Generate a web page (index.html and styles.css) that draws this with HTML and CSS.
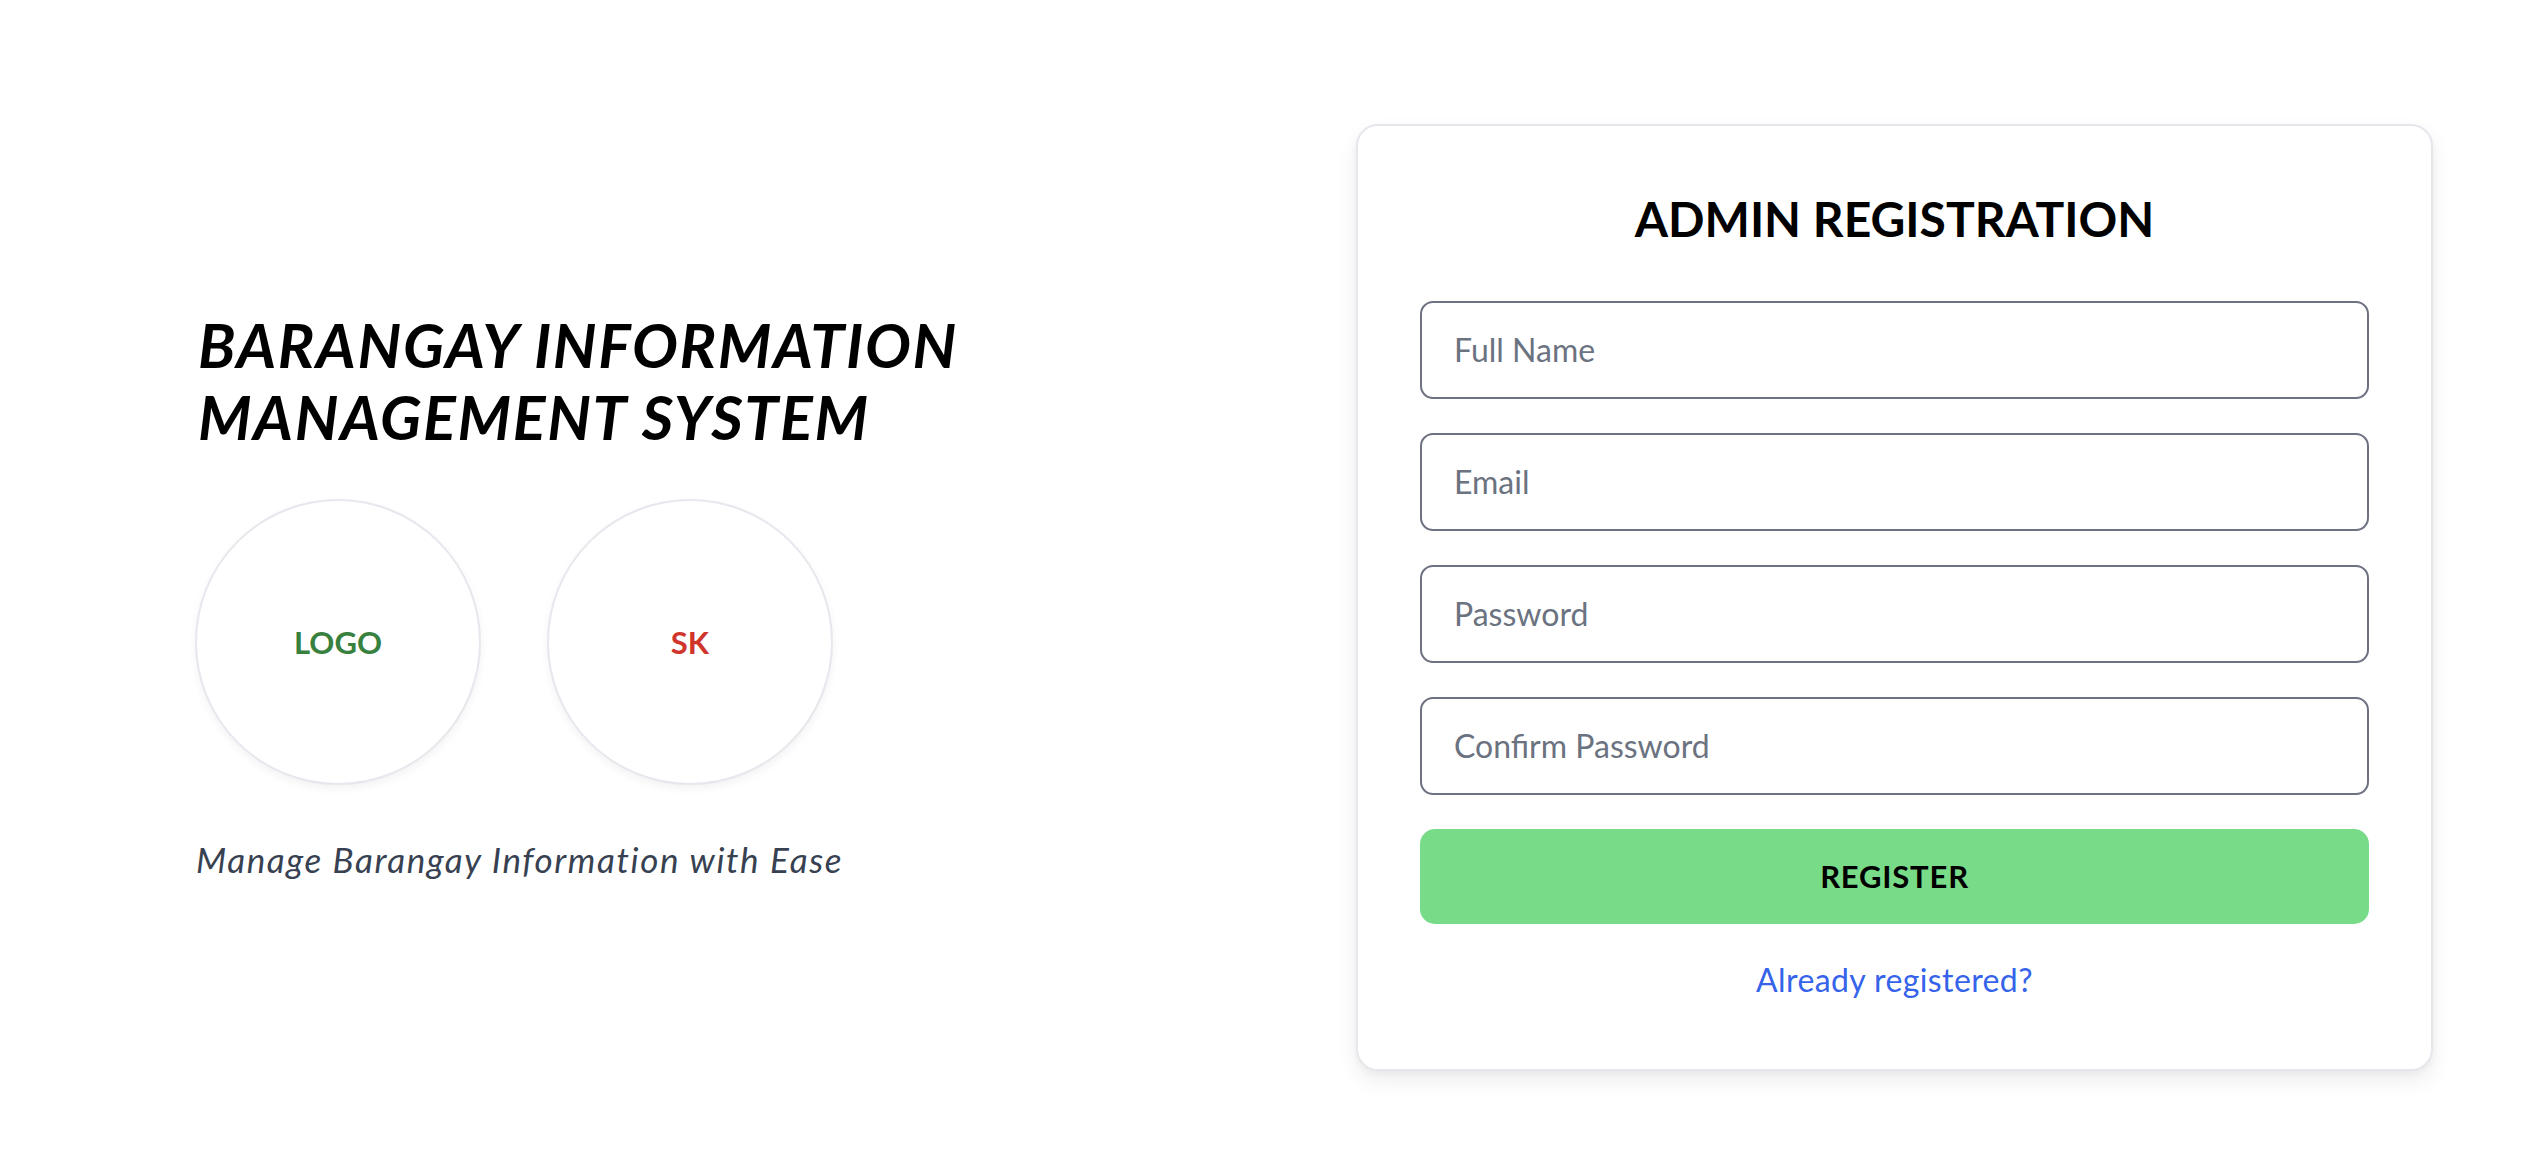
FILE: index.html
```html
<!DOCTYPE html>
<html lang="en">
<head>
<meta charset="utf-8">
<title>Admin Registration</title>
<link rel="stylesheet" href="styles.css">
</head>
<body>
<main class="page">
  <section class="intro">
    <h1 class="title">BARANGAY INFORMATION<br>MANAGEMENT SYSTEM</h1>
    <div class="logos">
      <div class="logo-circle"><span class="logo-text logo-green">LOGO</span></div>
      <div class="logo-circle"><span class="logo-text logo-red">SK</span></div>
    </div>
    <p class="tagline">Manage Barangay Information with Ease</p>
  </section>
  <section class="card">
    <h2 class="card-title">ADMIN REGISTRATION</h2>
    <form class="form">
      <input class="field" type="text" placeholder="Full Name">
      <input class="field" type="email" placeholder="Email">
      <input class="field" type="password" placeholder="Password">
      <input class="field" type="password" placeholder="Confirm Password">
      <button class="btn" type="button">REGISTER</button>
    </form>
    <a class="link" href="#">Already registered?</a>
  </section>
</main>
</body>
</html>
```
FILE: styles.css
```css
* { box-sizing: border-box; }
html, body { margin: 0; padding: 0; background: #ffffff; }
body { font-family: "Lato", "Inter", "Liberation Sans", sans-serif; color: #000; }

.page {
  min-height: 100vh;
  display: flex;
  align-items: center;
  justify-content: space-between;
  padding: 26px 99px 0 198px;
}

.intro { display: flex; flex-direction: column; }

.title {
  margin: 0;
  font-size: 61px;
  line-height: 72px;
  font-weight: 700;
  font-style: italic;
  letter-spacing: 1.7px;
  color: #000;
}

.logos {
  display: flex;
  gap: 66px;
  margin-top: 46px;
  margin-left: -3px;
}

.logo-circle {
  width: 286px;
  height: 286px;
  border-radius: 50%;
  border: 2px solid #e7e7ee;
  box-shadow: 0 4px 8px rgba(0, 0, 0, 0.05);
  display: flex;
  align-items: center;
  justify-content: center;
  background: #fff;
}

.logo-text { font-size: 31px; font-weight: 700; }
.logo-green { color: #37803e; }
.logo-red { color: #d0352c; }

.tagline {
  margin: 47px 0 0 -2px;
  font-size: 35px;
  line-height: 54px;
  font-style: italic;
  letter-spacing: 1.6px;
  color: #374151;
}

.card {
  flex-shrink: 0;
  width: 1077px;
  border: 2px solid #e6e6ec;
  border-radius: 22px;
  padding: 64px 62px 65px;
  background: #fff;
  box-shadow: 0 10px 22px rgba(0, 0, 0, 0.07), 0 3px 6px rgba(0, 0, 0, 0.04);
  display: flex;
  flex-direction: column;
  align-items: center;
}

.card-title {
  margin: 0;
  font-size: 48px;
  line-height: 58px;
  font-weight: 700;
  text-align: center;
}

.form {
  width: 100%;
  margin-top: 53px;
  display: flex;
  flex-direction: column;
  gap: 34px;
}

.field {
  width: 100%;
  height: 98px;
  border: 2px solid #6e7180;
  border-radius: 13px;
  padding: 0 32px;
  font-family: inherit;
  font-size: 32px;
  color: #111827;
  background: #fff;
  outline: none;
}
.field::placeholder { color: #6b7280; opacity: 1; }

.btn {
  width: 100%;
  height: 95px;
  border: 0;
  border-radius: 15px;
  background: #78db88;
  font-family: inherit;
  font-size: 31px;
  font-weight: 700;
  letter-spacing: 0.8px;
  color: #000;
  cursor: pointer;
}

.link {
  margin-top: 32px;
  font-size: 32px;
  line-height: 48px;
  letter-spacing: 0.4px;
  color: #3563e9;
  text-decoration: none;
}
```
